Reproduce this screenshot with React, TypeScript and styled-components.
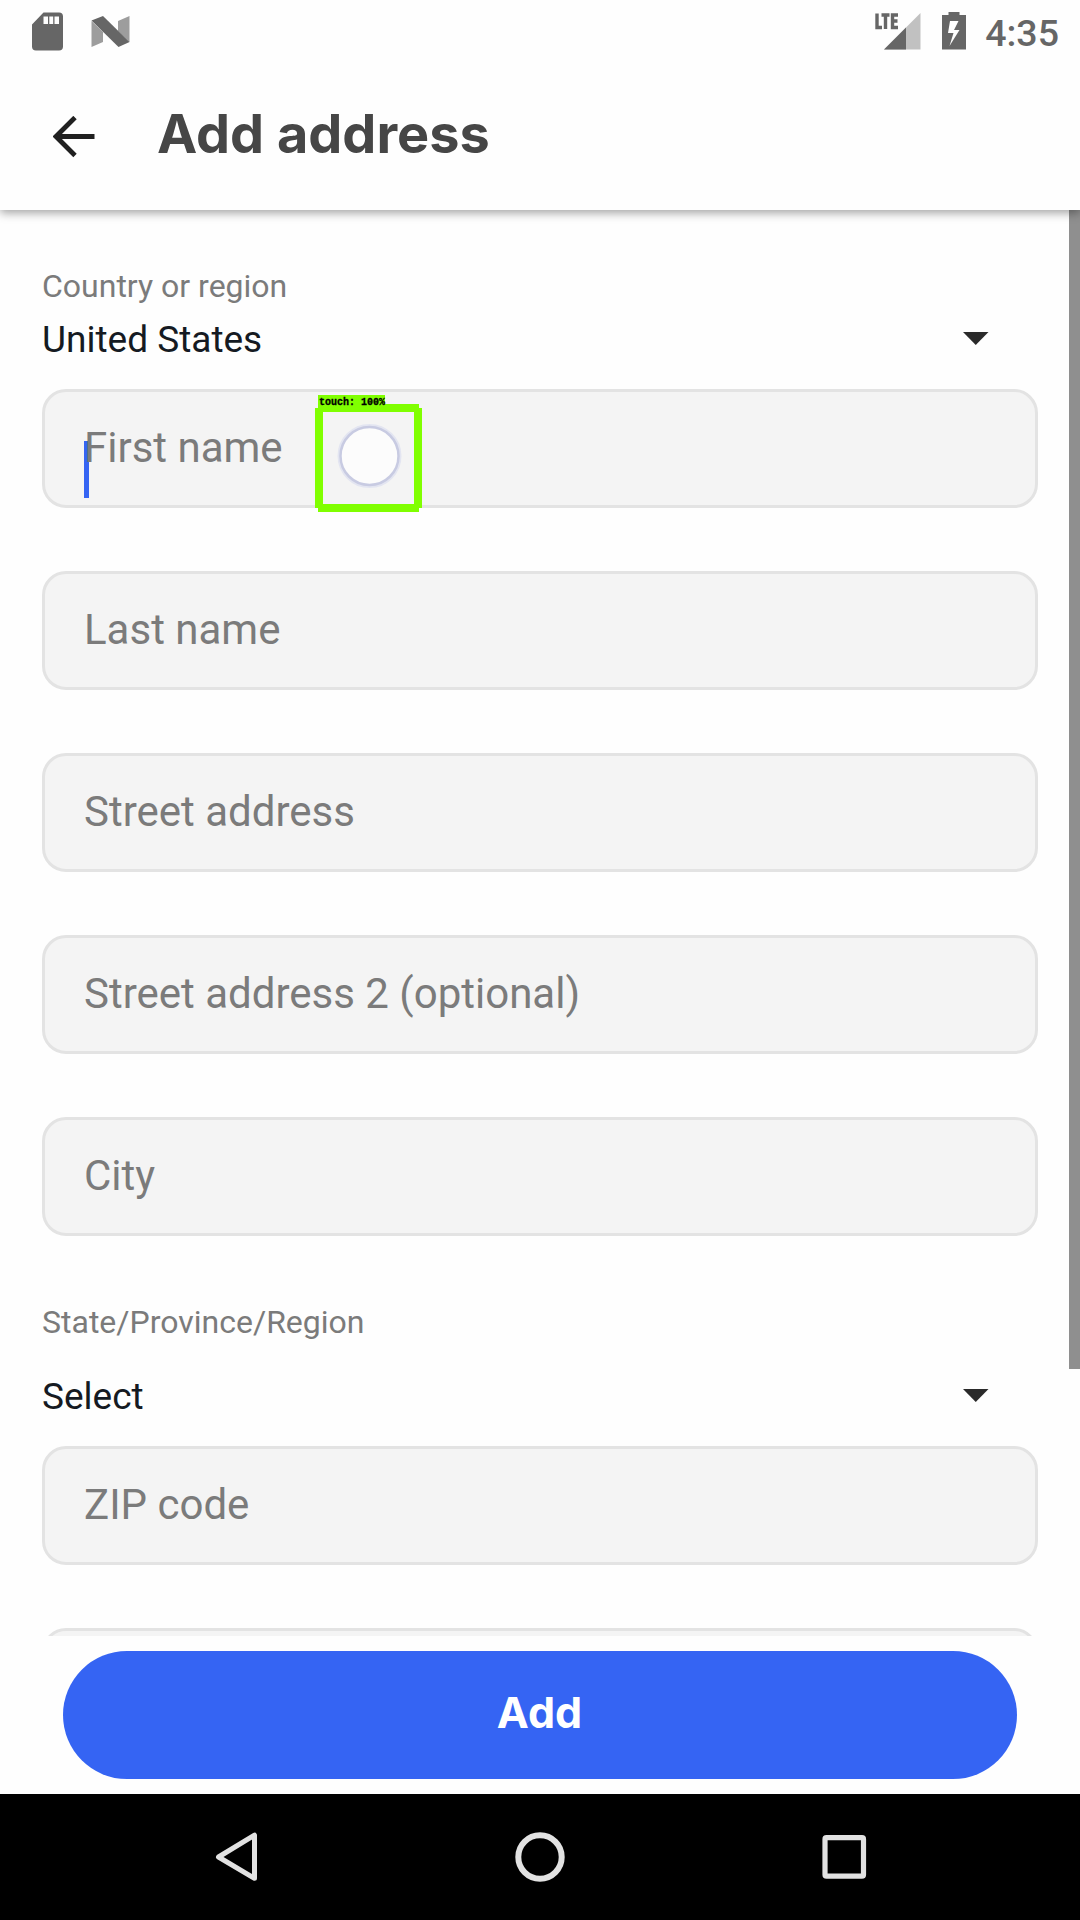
import React from "react";
import styled, { createGlobalStyle } from "styled-components";

const GlobalStyle = createGlobalStyle`
  *, *::before, *::after { box-sizing: border-box; }
  html, body { margin: 0; padding: 0; background: #fefefe; }
`;

const Screen = styled.div`
  position: relative;
  display: flex;
  flex-direction: column;
  width: 1080px;
  height: 1920px;
  overflow: hidden;
  background: #fefefe;
  font-family: Roboto, "Noto Sans", sans-serif;
`;

const TopArea = styled.div`
  flex: none;
  position: relative;
  z-index: 1;
  height: 210px;
  background: #fefefe;
  box-shadow: 0 3px 9px rgba(0, 0, 0, 0.36);
`;

const StatusBar = styled.div`
  display: flex;
  justify-content: space-between;
  height: 63px;
  padding: 0 21px 0 32px;
`;

const StatusGroup = styled.div<{ $gap: number }>`
  display: flex;
  align-items: center;
  gap: ${(p) => p.$gap}px;
  height: 63px;
`;

const StatusIcon = styled.svg`
  display: block;
  height: 63px;
`;

const Clock = styled.span`
  color: #666;
  font-size: 37.5px;
  font-weight: 500;
  line-height: 44px;
  padding-top: 2px;
  margin-left: -2px;
`;

const AppBar = styled.header`
  display: flex;
  align-items: center;
  gap: 62px;
  height: 147px;
  padding-left: 53px;
`;

const BackIcon = styled.svg`
  display: block;
  width: 42px;
  height: 42px;
`;

const Title = styled.h1`
  margin: 0;
  padding-bottom: 6px;
  color: #464646;
  font-family: Inter, "Liberation Sans", sans-serif;
  font-size: 54px;
  font-weight: 700;
  line-height: 66px;
  white-space: nowrap;
`;

const Content = styled.main`
  display: flex;
  height: 1426px;
  overflow: hidden;
  flex: none;
`;

const Form = styled.div`
  flex: 1;
  padding: 56px 31px 0 42px;
`;

const ScrollTrack = styled.div`
  width: 11px;
`;

const ScrollThumb = styled.div`
  height: 1159px;
  background: #8f8f8f;
`;

const PickerGroup = styled.section<{ $gap: number; $top: number; $bottom: number }>`
  display: flex;
  flex-direction: column;
  gap: ${(p) => p.$gap}px;
  margin: ${(p) => p.$top}px 0 ${(p) => p.$bottom}px;
`;

const PickerLabel = styled.div`
  color: #7b7b7b;
  font-size: 32px;
  line-height: 40px;
`;

const PickerRow = styled.div`
  display: flex;
  align-items: center;
  justify-content: space-between;
  height: 66px;
  padding-right: 49px;
  color: #151a22;
  font-size: 37px;
`;

const Caret = styled.svg`
  display: block;
  width: 26px;
  height: 13px;
  margin-bottom: 1px;
  fill: #2a2a2a;
`;

const FieldStack = styled.div`
  display: flex;
  flex-direction: column;
  gap: 63px;
`;

const Field = styled.div`
  position: relative;
  display: flex;
  align-items: center;
  height: 119px;
  padding: 0 39px 2px;
  border: 3px solid #e3e3e3;
  border-radius: 24px;
  background: #f4f4f4;
`;

const Placeholder = styled.span`
  position: relative;
  color: #7b7b7b;
  font-size: 42px;
  line-height: 50px;
`;

const TextCursor = styled.i`
  position: absolute;
  left: 39px;
  top: 49px;
  width: 5px;
  height: 57px;
  background: #3564f3;
`;

const TouchOverlay = styled.div`
  position: absolute;
  left: 315px;
  top: 395px;
  width: 107px;
  height: 117px;
  z-index: 2;
`;

const TouchFrame = styled.svg`
  display: block;
`;

const TouchTag = styled.span`
  position: absolute;
  left: 3px;
  top: 0;
  width: 67px;
  height: 11px;
  padding-left: 1px;
  background: #80ff00;
  color: #000;
  font: bold 10px/15px "Liberation Mono", "DejaVu Sans Mono", monospace;
  -webkit-text-stroke: 0.3px #000;
  white-space: pre;
`;

const Footer = styled.footer`
  flex: none;
  height: 158px;
  padding: 15px 63px;
  background: #fefefe;
`;

const AddButton = styled.button`
  display: block;
  width: 100%;
  height: 128px;
  padding: 0 1px 6px 0;
  border: 0;
  border-radius: 64px;
  background: #3564f3;
  color: #fff;
  font: 700 43px Inter, "Liberation Sans", sans-serif;
`;

const NavBar = styled.nav`
  display: flex;
  flex: none;
  justify-content: center;
  align-items: center;
  gap: 254px;
  height: 126px;
  background: #000;
`;

const NavIcon = styled.svg`
  display: block;
  width: 50px;
  height: 50px;
  fill: none;
  stroke: #e2e2e2;
`;

function Picker({ label, value, gap, top, bottom }: { label: string; value: string; gap: number; top: number; bottom: number }) {
  return (
    <PickerGroup $gap={gap} $top={top} $bottom={bottom}>
      <PickerLabel>{label}</PickerLabel>
      <PickerRow>
        <span>{value}</span>
        <Caret viewBox="0 0 26 13"><path d="M0 0H25.500L12.750 13Z" /></Caret>
      </PickerRow>
    </PickerGroup>
  );
}

function TextField({ label, focused }: { label: string; focused?: boolean }) {
  return (
    <Field>
      {focused && <TextCursor />}
      <Placeholder>{label}</Placeholder>
    </Field>
  );
}

export default function App() {
  return (
    <>
      <GlobalStyle />
      <Screen>
        <TopArea>
          <StatusBar>
            <StatusGroup $gap={28}>
              <StatusIcon width="31" viewBox="0 0 31 63">
                <path fill="#666" fillRule="evenodd" d="M11.5 12.5H27a4 4 0 0 1 4 4V46.500a4 4 0 0 1-4 4H4a4 4 0 0 1-4-4V24.500ZM11.500 16.500V24H16V16.500ZM17.300 16.500V24H21.200V16.500ZM22.500 16.500V24H27V16.500Z" />
              </StatusIcon>
              <StatusIcon width="39" viewBox="0 0 39 63">
                <path fill="#9d9d9d" d="M0.500 21L12 32V42L0.500 47ZM27 21L38.500 16V42L27 31Z" />
                <path fill="#666" d="M0.500 20.500L12 16L38.500 42L27.500 47Z" />
              </StatusIcon>
            </StatusGroup>
            <StatusGroup $gap={21}>
              <StatusIcon width="47" viewBox="0 0 47 63">
                <path fill="#c1c1c1" d="M46.500 13V49.500H10Z" />
                <path fill="#fefefe" d="M0 0H26V31H0Z" />
                <path fill="#666" d="M32 27.500V49.500H10Z" />
                <path fill="none" stroke="#666" strokeWidth="3.400" d="M3 13.500V27.500H8M7.500 15H15.500M11.500 15V29M24 15H18.500V27.500H24M18.500 21H23.500" />
              </StatusIcon>
              <StatusIcon width="24" viewBox="0 0 24 63">
                <path fill="#666" fillRule="evenodd" d="M6.500 12H17.500V15H24V49.500H0V15H6.500ZM8 21L6 33H11.500L7.500 46L17.500 30H12L16.500 21Z" />
              </StatusIcon>
              <Clock>4:35</Clock>
            </StatusGroup>
          </StatusBar>
          <AppBar>
            <BackIcon viewBox="0 0 42 42">
              <path d="M41.500 20.500H4M22 1.500L3 20.500L22 39.500" fill="none" stroke="#202020" strokeWidth="4.800" />
            </BackIcon>
            <Title>Add address</Title>
          </AppBar>
        </TopArea>
        <Content>
          <Form>
            <Picker label="Country or region" value="United States" gap={0} top={0} bottom={17} />
            <FieldStack>
              <TextField label="First name" focused />
              <TextField label="Last name" />
              <TextField label="Street address" />
              <TextField label="Street address 2 (optional)" />
              <TextField label="City" />
            </FieldStack>
            <Picker label="State/Province/Region" value="Select" gap={21} top={66} bottom={17} />
            <FieldStack>
              <TextField label="ZIP code" />
              <Field />
            </FieldStack>
          </Form>
          <ScrollTrack><ScrollThumb /></ScrollTrack>
        </Content>
        <Footer><AddButton>Add</AddButton></Footer>
        <NavBar>
          <NavIcon viewBox="0 0 50 50"><path d="M43.500 3.200V46.300L7.500 25Z" strokeWidth="5" strokeLinejoin="round" /></NavIcon>
          <NavIcon viewBox="0 0 50 50"><circle cx="25" cy="25" r="21.700" strokeWidth="6" /></NavIcon>
          <NavIcon viewBox="0 0 50 50"><rect x="6" y="5.700" width="38.500" height="38.500" rx="1.500" strokeWidth="5.200" /></NavIcon>
        </NavBar>
        <TouchOverlay>
          <TouchFrame width="107" height="117" viewBox="0 0 107 117">
            <circle cx="54.500" cy="61" r="29.500" fill="none" stroke="#e3e5f1" strokeWidth="5" />
            <circle cx="54.500" cy="61" r="29" fill="#fcfcfc" stroke="#c8cbe2" strokeWidth="2.500" />
            <path fill="#80ff00" fillRule="evenodd" d="M3 9H104V13H107V113H104V117H3V113H0V13H3ZM8 17V109H99V17Z" />
          </TouchFrame>
          <TouchTag>touch: 100%</TouchTag>
        </TouchOverlay>
      </Screen>
    </>
  );
}
